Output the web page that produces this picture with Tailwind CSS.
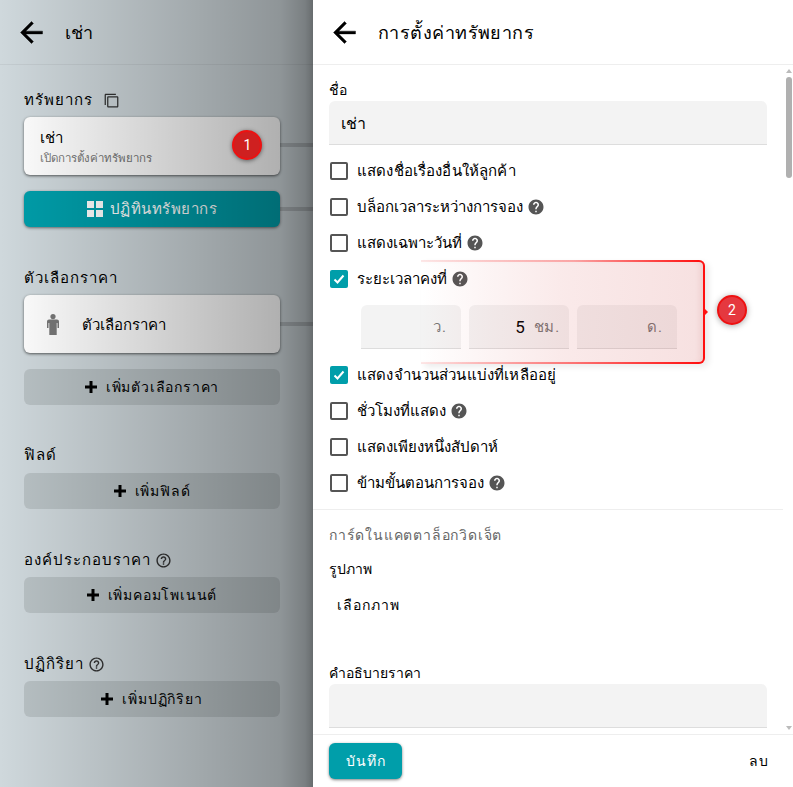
<!DOCTYPE html>
<html lang="en">
<head>
    <meta charset="UTF-8">
    <meta name="viewport" content="width=device-width, initial-scale=1.0">
    <title>การตั้งค่าทรัพยากร</title>
    <script src="https://cdn.jsdelivr.net/npm/@tailwindcss/browser@4"></script>
</head>
<body class="h-[787px] w-[793px] overflow-hidden bg-white font-[Roboto,sans-serif] text-black">
<div class="relative flex h-[787px]">

    <!-- Resource list, dimmed -->
    <div class="relative h-full w-[313px] shrink-0 overflow-hidden bg-[#cfd8dc]">
        <div class="flex h-[65px] items-center border-b border-[#c4ccd0] pl-[15px]">
            <svg class="h-[33px] w-[33px]" viewBox="0 0 24 24" fill="#000" stroke="#000" stroke-width=".3"><path d="M20 11H7.830l5.590-5.590L12 4l-8 8 8 8 1.410-1.410L7.830 13H20v-2z"/></svg>
            <span class="ml-[17px] text-[18px] font-medium">เช่า</span>
        </div>

        <div class="px-6">
            <div class="mt-[24px] flex h-[22px] items-center gap-2 text-[15px] font-medium tracking-[1px]">
                ทรัพยากร
                <svg class="ml-[3px] h-[15px] w-[15px] -scale-y-100" viewBox="0 0 24 24" fill="#333"><path d="M3 5H1v16c0 1.100.9 2 2 2h16v-2H3V5zm18-4H7c-1.100 0-2 .9-2 2v14c0 1.100.9 2 2 2h14c1.100 0 2-.9 2-2V3c0-1.100-.9-2-2-2zm0 16H7V3h14v14z"/></svg>
            </div>
            <div class="relative mt-[6px] flex h-[58px] w-[256px] flex-col justify-center rounded-md bg-white px-4 pt-[2px] shadow-[0_1px_3px_rgba(0,0,0,.6)]">
                <div class="text-[15px] font-medium leading-[22px]">เช่า</div>
                <div class="text-[11.5px] leading-[18px] text-[#777]">เปิดการตั้งค่าทรัพยากร</div>
                <div class="absolute left-[256px] top-[26px] h-[4px] w-[33px] bg-black/15"></div>
            </div>
            <div class="relative mt-[16px] flex h-[36px] w-[256px] items-center justify-center gap-[7px] rounded-md bg-[#009eaa] text-[15px] font-medium tracking-[.5px] text-white shadow-[0_1px_3px_rgba(0,0,0,.5)]">
                <svg class="h-[16px] w-[16px]" viewBox="0 0 16 16" fill="#fff"><rect width="7" height="7"/><rect x="9" width="7" height="7"/><rect y="9" width="7" height="7"/><rect x="9" y="9" width="7" height="7"/></svg>
                ปฏิทินทรัพยากร
                <div class="absolute left-[256px] top-[16px] h-[4px] w-[33px] bg-black/15"></div>
            </div>

            <div class="mt-[40px] flex h-[22px] items-center text-[15px] font-medium tracking-[1px]">ตัวเลือกราคา</div>
            <div class="relative mt-[6px] flex h-[58px] w-[256px] items-center rounded-md bg-white pl-[23px] shadow-[0_1px_3px_rgba(0,0,0,.6)]">
                <svg class="h-[21px] w-[12px]" viewBox="0 0 12 21" fill="#777"><circle cx="6" cy="2.600" r="2.600"/><path d="M2 5.500h8a2 2 0 0 1 2 2V14h-1.500V9h-.8v12H2.300V9h-.8v5H0V7.500a2 2 0 0 1 2-2z"/></svg>
                <span class="ml-[23px] pt-[2px] text-[15px] font-medium">ตัวเลือกราคา</span>
                <div class="absolute left-[256px] top-[27px] h-[4px] w-[33px] bg-black/15"></div>
            </div>
            <div class="mt-[16px] flex h-[36px] w-[256px] items-center justify-center gap-[9px] rounded-md bg-[#0000001a] text-[14px] font-medium tracking-[.8px]">
                <svg class="h-[12px] w-[12px]" viewBox="0 0 12 12" fill="#000"><path d="M4.500 0h3v4.500H12v3H7.500V12h-3V7.500H0v-3h4.500z"/></svg>
                เพิ่มตัวเลือกราคา
            </div>

            <div class="mt-[39px] flex h-[22px] items-center text-[15px] font-medium tracking-[1px]">ฟิลด์</div>
            <div class="mt-[7px] flex h-[36px] w-[256px] items-center justify-center gap-[9px] rounded-md bg-[#0000001a] text-[14px] font-medium tracking-[.8px]">
                <svg class="h-[12px] w-[12px]" viewBox="0 0 12 12" fill="#000"><path d="M4.500 0h3v4.500H12v3H7.500V12h-3V7.500H0v-3h4.500z"/></svg>
                เพิ่มฟิลด์
            </div>

            <div class="mt-[40px] flex h-[22px] items-center gap-1 text-[15px] font-medium tracking-[1px]">
                องค์ประกอบราคา
                <svg class="h-[17px] w-[17px]" viewBox="0 0 24 24" fill="#333"><path d="M11 18h2v-2h-2v2zm1-16C6.480 2 2 6.480 2 12s4.480 10 10 10 10-4.480 10-10S17.520 2 12 2zm0 18c-4.410 0-8-3.590-8-8s3.590-8 8-8 8 3.590 8 8-3.590 8-8 8zm0-14c-2.210 0-4 1.790-4 4h2c0-1.100.9-2 2-2s2 .9 2 2c0 2-3 1.750-3 5h2c0-2.250 3-2.500 3-5 0-2.210-1.790-4-4-4z"/></svg>
            </div>
            <div class="mt-[6px] flex h-[36px] w-[256px] items-center justify-center gap-[9px] rounded-md bg-[#0000001a] text-[14px] font-medium tracking-[.8px]">
                <svg class="h-[12px] w-[12px]" viewBox="0 0 12 12" fill="#000"><path d="M4.500 0h3v4.500H12v3H7.500V12h-3V7.500H0v-3h4.500z"/></svg>
                เพิ่มคอมโพเนนต์
            </div>

            <div class="mt-[40px] flex h-[22px] items-center gap-1 text-[15px] font-medium tracking-[1px]">
                ปฏิกิริยา
                <svg class="h-[17px] w-[17px]" viewBox="0 0 24 24" fill="#333"><path d="M11 18h2v-2h-2v2zm1-16C6.480 2 2 6.480 2 12s4.480 10 10 10 10-4.480 10-10S17.520 2 12 2zm0 18c-4.410 0-8-3.590-8-8s3.590-8 8-8 8 3.590 8 8-3.590 8-8 8zm0-14c-2.210 0-4 1.790-4 4h2c0-1.100.9-2 2-2s2 .9 2 2c0 2-3 1.750-3 5h2c0-2.250 3-2.500 3-5 0-2.210-1.790-4-4-4z"/></svg>
            </div>
            <div class="mt-[6px] flex h-[36px] w-[256px] items-center justify-center gap-[9px] rounded-md bg-[#0000001a] text-[14px] font-medium tracking-[.8px]">
                <svg class="h-[12px] w-[12px]" viewBox="0 0 12 12" fill="#000"><path d="M4.500 0h3v4.500H12v3H7.500V12h-3V7.500H0v-3h4.500z"/></svg>
                เพิ่มปฏิกิริยา
            </div>
        </div>

        <!-- dim layer over the whole panel -->
        <div class="absolute inset-0 bg-[linear-gradient(to_right,rgba(0,0,0,0)_0px,rgba(0,0,0,.31)_280px,rgba(0,0,0,.41)_305px,rgba(0,0,0,.5)_313px)]"></div>

        <!-- marker 1 -->
        <div class="absolute left-[232px] top-[130px] flex h-[30px] w-[30px] items-center justify-center rounded-full border-2 border-[#ee1111] bg-[#cf2020] pl-[1px] text-[14px] text-white shadow-[0_1px_4px_rgba(0,0,0,.5)]">1</div>
    </div>

    <!-- Settings panel -->
    <div class="flex h-full w-[480px] flex-col bg-white">
        <div class="flex h-[65px] shrink-0 items-center border-b border-[#eee] pl-[15px]">
            <svg class="h-[33px] w-[33px]" viewBox="0 0 24 24" fill="#000" stroke="#000" stroke-width=".3"><path d="M20 11H7.830l5.590-5.590L12 4l-8 8 8 8 1.410-1.410L7.830 13H20v-2z"/></svg>
            <span class="ml-[17px] text-[18px] font-medium tracking-[.45px]">การตั้งค่าทรัพยากร</span>
        </div>

        <div class="relative min-h-0 flex-1 overflow-hidden">
            <!-- scrollbar -->
            <div class="absolute right-0 top-0 flex h-full w-[8px] flex-col items-center">
                <div class="mt-[4px] h-0 w-0 border-x-[3px] border-b-[4px] border-x-transparent border-b-[#bbb]"></div>
                <div class="mt-[4px] h-[101px] w-[6px] rounded-full bg-[#b0b0b0]"></div>
                <div class="mt-auto mb-[4px] h-0 w-0 border-x-[3px] border-t-[4px] border-x-transparent border-t-[#bbb]"></div>
            </div>

            <div class="w-[438px] ml-[16px]">
                <div class="mt-[14px] text-[14px] leading-[22px]">ชื่อ</div>
                <div class="flex h-[44px] items-center rounded-t-md border-b border-[#ddd] bg-[#f3f3f3] pl-[12px] pt-[2px] text-[16px]">เช่า</div>

                <div class="mt-[8px] flex h-[36px] items-center gap-[9px] text-[15px] tracking-[.15px]">
                    <span class="ml-[1px] h-[18px] w-[18px] rounded-[2px] border-2 border-[#555]"></span>แสดงชื่อเรื่องอื่นให้ลูกค้า
                </div>
                <div class="flex h-[36px] items-center gap-[9px] text-[15px]">
                    <span class="ml-[1px] h-[18px] w-[18px] rounded-[2px] border-2 border-[#555]"></span>บล็อกเวลาระหว่างการจอง
                    <svg class="-ml-[5px] h-[18px] w-[18px]" viewBox="0 0 24 24" fill="#555"><path d="M12 2C6.480 2 2 6.480 2 12s4.480 10 10 10 10-4.480 10-10S17.520 2 12 2zm1 17h-2v-2h2v2zm2.070-7.750l-.9.920C13.450 12.900 13 13.500 13 15h-2v-.5c0-1.100.450-2.100 1.170-2.830l1.240-1.260c.370-.360.590-.860.590-1.410 0-1.100-.9-2-2-2s-2 .9-2 2H8c0-2.210 1.790-4 4-4s4 1.790 4 4c0 .880-.360 1.680-.930 2.250z"/></svg>
                </div>
                <div class="flex h-[36px] items-center gap-[9px] text-[15px]">
                    <span class="ml-[1px] h-[18px] w-[18px] rounded-[2px] border-2 border-[#555]"></span>แสดงเฉพาะวันที่
                    <svg class="-ml-[5px] h-[18px] w-[18px]" viewBox="0 0 24 24" fill="#555"><path d="M12 2C6.480 2 2 6.480 2 12s4.480 10 10 10 10-4.480 10-10S17.520 2 12 2zm1 17h-2v-2h2v2zm2.070-7.750l-.9.920C13.450 12.900 13 13.500 13 15h-2v-.5c0-1.100.450-2.100 1.170-2.830l1.240-1.260c.370-.360.590-.860.590-1.410 0-1.100-.9-2-2-2s-2 .9-2 2H8c0-2.210 1.790-4 4-4s4 1.790 4 4c0 .880-.360 1.680-.930 2.250z"/></svg>
                </div>
                <div class="flex h-[36px] items-center gap-[9px] text-[15px]">
                    <span class="ml-[1px] flex h-[18px] w-[18px] items-center justify-center rounded-[2px] bg-[#009eaa]">
                        <svg class="h-[12px] w-[12px]" viewBox="0 0 12 12" fill="none" stroke="#fff" stroke-width="2"><path d="M1.500 6.500l3 3 6-7"/></svg>
                    </span>ระยะเวลาคงที่
                    <svg class="-ml-[5px] h-[18px] w-[18px]" viewBox="0 0 24 24" fill="#555"><path d="M12 2C6.480 2 2 6.480 2 12s4.480 10 10 10 10-4.480 10-10S17.520 2 12 2zm1 17h-2v-2h2v2zm2.070-7.750l-.9.920C13.450 12.900 13 13.500 13 15h-2v-.5c0-1.100.450-2.100 1.170-2.830l1.240-1.260c.370-.360.590-.860.590-1.410 0-1.100-.9-2-2-2s-2 .9-2 2H8c0-2.210 1.790-4 4-4s4 1.790 4 4c0 .880-.360 1.680-.930 2.250z"/></svg>
                </div>

                <div class="ml-[32px] mt-[8px] flex gap-[8px]">
                    <div class="flex h-[44px] w-[100px] items-center justify-end rounded-t-md border-b border-[#ddd] bg-[#f3f3f3] pr-[14px] pt-[2px] text-[15px] tracking-[1px] text-[#777]">ว.</div>
                    <div class="flex h-[44px] w-[100px] items-center justify-end gap-[8px] rounded-t-md border-b border-[#ddd] bg-[#f3f3f3] pr-[9px] pt-[2px] text-[15px] tracking-[.8px] text-[#777]"><span class="text-[17px] text-black">5</span>ชม.</div>
                    <div class="flex h-[44px] w-[100px] items-center justify-end rounded-t-md border-b border-[#ddd] bg-[#f3f3f3] pr-[14px] pt-[2px] text-[15px] tracking-[1px] text-[#777]">ด.</div>
                </div>

                <div class="mt-[8px] flex h-[36px] items-center gap-[9px] text-[15px] tracking-[.15px]">
                    <span class="ml-[1px] flex h-[18px] w-[18px] items-center justify-center rounded-[2px] bg-[#009eaa]">
                        <svg class="h-[12px] w-[12px]" viewBox="0 0 12 12" fill="none" stroke="#fff" stroke-width="2"><path d="M1.500 6.500l3 3 6-7"/></svg>
                    </span>แสดงจำนวนส่วนแบ่งที่เหลืออยู่
                </div>
                <div class="flex h-[36px] items-center gap-[9px] text-[15px]">
                    <span class="ml-[1px] h-[18px] w-[18px] rounded-[2px] border-2 border-[#555]"></span>ชั่วโมงที่แสดง
                    <svg class="-ml-[5px] h-[18px] w-[18px]" viewBox="0 0 24 24" fill="#555"><path d="M12 2C6.480 2 2 6.480 2 12s4.480 10 10 10 10-4.480 10-10S17.520 2 12 2zm1 17h-2v-2h2v2zm2.070-7.750l-.9.920C13.450 12.900 13 13.500 13 15h-2v-.5c0-1.100.450-2.100 1.170-2.830l1.240-1.260c.370-.360.590-.860.590-1.410 0-1.100-.9-2-2-2s-2 .9-2 2H8c0-2.210 1.790-4 4-4s4 1.790 4 4c0 .880-.360 1.680-.930 2.250z"/></svg>
                </div>
                <div class="flex h-[36px] items-center gap-[9px] text-[15px]">
                    <span class="ml-[1px] h-[18px] w-[18px] rounded-[2px] border-2 border-[#555]"></span>แสดงเพียงหนึ่งสัปดาห์
                </div>
                <div class="flex h-[36px] items-center gap-[9px] text-[15px]">
                    <span class="ml-[1px] h-[18px] w-[18px] rounded-[2px] border-2 border-[#555]"></span>ข้ามขั้นตอนการจอง
                    <svg class="-ml-[5px] h-[18px] w-[18px]" viewBox="0 0 24 24" fill="#555"><path d="M12 2C6.480 2 2 6.480 2 12s4.480 10 10 10 10-4.480 10-10S17.520 2 12 2zm1 17h-2v-2h2v2zm2.070-7.750l-.9.920C13.450 12.900 13 13.500 13 15h-2v-.5c0-1.100.450-2.100 1.170-2.830l1.240-1.260c.370-.360.590-.860.590-1.410 0-1.100-.9-2-2-2s-2 .9-2 2H8c0-2.210 1.790-4 4-4s4 1.790 4 4c0 .880-.360 1.680-.930 2.250z"/></svg>
                </div>
            </div>

            <div class="mt-[8px] w-[470px] border-t border-[#eee]"></div>

            <div class="w-[438px] ml-[16px]">
                <div class="mt-[14px] text-[14px] leading-[22px] tracking-[.8px] text-[#666]">การ์ดในแคตตาล็อกวิดเจ็ต</div>
                <div class="mt-[12px] text-[14px] leading-[22px]">รูปภาพ</div>
                <div class="ml-[8px] mt-[14px] text-[14px] font-medium leading-[22px] tracking-[1px]">เลือกภาพ</div>
                <div class="mt-[46px] text-[14px] leading-[22px]">คำอธิบายราคา</div>
                <div class="h-[44px] rounded-t-md border-b border-[#ddd] bg-[#f3f3f3]"></div>
            </div>
        </div>

        <div class="flex h-[53px] shrink-0 items-center justify-between border-t border-[#eee] pl-[16px] pr-[24px]">
            <div class="flex h-[36px] w-[73px] items-center justify-center rounded-md bg-[#009eaa] text-[14px] font-medium tracking-[1px] text-white shadow-[0_1px_3px_rgba(0,0,0,.5)]">บันทึก</div>
            <div class="text-[14px] font-medium tracking-[1px]">ลบ</div>
        </div>
    </div>

    <!-- callout 2 -->
    <div class="pointer-events-none absolute left-[421px] top-[260px] h-[104px] w-[284px] rounded-r-md bg-[linear-gradient(to_right,rgba(210,60,60,0),rgba(210,60,60,.06)_25%,rgba(210,60,60,.11)_50%,rgba(200,50,50,.15))] shadow-[4px_3px_6px_rgba(0,0,0,.08),inset_-6px_0_6px_-2px_rgba(170,50,50,.12)]">
        <div class="absolute left-0 right-[6px] top-0 h-[2px] bg-[linear-gradient(to_right,rgba(255,0,0,.08),rgba(255,70,70,.4)_55%,#f11)]"></div>
        <div class="absolute bottom-0 left-0 right-[6px] h-[2px] bg-[linear-gradient(to_right,rgba(255,0,0,.08),rgba(255,40,40,.6)_55%,#f11)]"></div>
        <div class="absolute inset-y-0 right-0 w-[8px] rounded-r-md border-y-2 border-r-2 border-[#f11]"></div>
        <div class="absolute left-[283px] top-[48px] h-0 w-0 border-y-[4px] border-l-[4px] border-y-transparent border-l-[#f11]"></div>
    </div>
    <div class="absolute left-[717px] top-[295px] flex h-[30px] w-[30px] items-center justify-center rounded-full border-2 border-[#ee1111] bg-[#e5383f] text-[14px] text-white shadow-[0_1px_6px_rgba(0,0,0,.35)]">2</div>
</div>
</body>
</html>
